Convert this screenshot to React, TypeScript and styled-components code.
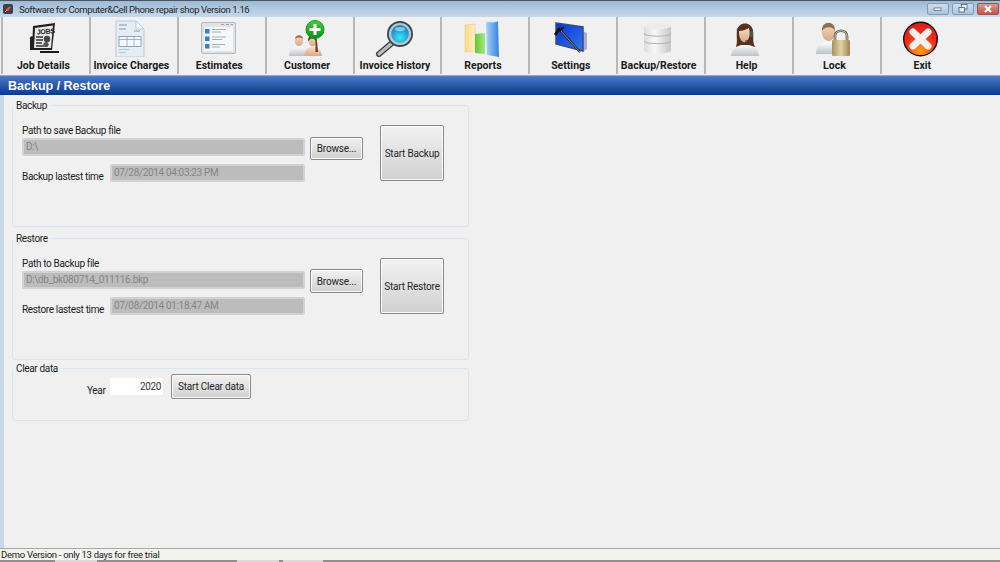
import styled, { createGlobalStyle } from 'styled-components'

const GlobalStyle = createGlobalStyle`
	html,
	body {
		margin: 0;
		padding: 0;
		background: #f0f0f0;
	}

	* {
		box-sizing: border-box;
	}
`

const Window = styled.div`
	display: flex;
	flex-direction: column;
	width: 1000px;
	height: 562px;
	overflow: hidden;
	background: #f0f0f0;
	color: #1c1c1c;
	font-family: Roboto, 'Liberation Sans', Arial, sans-serif;
	font-size: 10px;
	letter-spacing: -0.34px;
`

const TitleBar = styled.div`
	display: flex;
	align-items: center;
	height: 17px;
	padding: 0 1px 0 3px;
	border-top: 1px solid #4d5560;
	background: linear-gradient(#9dbad5, #c6d9ea);
`

const TitleText = styled.span`
	flex: 1;
	margin-left: 6px;
	font-size: 9.5px;
	letter-spacing: -0.39px;
	color: #20252b;
	white-space: nowrap;
`

const WinButtons = styled.div`
	display: flex;
	gap: 3px;
	margin-top: -1px;
`

const WinButton = styled.div<{ $close?: boolean }>`
	display: flex;
	align-items: center;
	justify-content: center;
	width: 22px;
	height: 12px;
	border: 1px solid ${(p) => (p.$close ? '#a05050' : '#7f9ab5')};
	border-radius: 2px;
	background: ${(p) =>
		p.$close
			? 'linear-gradient(#d99a94, #c4544a)'
			: 'linear-gradient(#cfdfee, #a9c3da)'};
`

const Toolbar = styled.div`
	display: flex;
	height: 58px;
	padding-left: 1px;
	background: #f0f0f0;
`

const ToolItem = styled.div`
	display: flex;
	flex-direction: column;
	align-items: center;
	width: 87.9px;
	height: 57px;
	padding: 2px 5px 0 0;
	border-left: 2px solid #b8b8b8;
`

const ToolIcon = styled.svg`
	display: block;
	width: 44px;
	height: 38px;
`

const ToolLabel = styled.span`
	margin-top: 3px;
	font-size: 10.5px;
	line-height: 12px;
	font-weight: 700;
	letter-spacing: 0;
	color: #1a1a1a;
	white-space: nowrap;
`

const HeaderBar = styled.div`
	display: flex;
	align-items: center;
	height: 20px;
	padding-left: 8px;
	border-top: 1px solid #8ca6dc;
	background: linear-gradient(#4c78c4, #0a3a8f);
	color: #ffffff;
	font-family: 'Liberation Sans', Arial, sans-serif;
	font-size: 12.5px;
	font-weight: 700;
	letter-spacing: 0;
`

const Body = styled.div`
	display: flex;
	flex: 1;
	min-height: 0;
`

const SideStrip = styled.div`
	width: 4px;
	background: #c9d7ea;
`

const Main = styled.main`
	display: flex;
	flex-direction: column;
	width: 465px;
	padding: 4px 0 0 8px;
`

const Group = styled.fieldset<{ $height: number; $gap: number }>`
	min-width: 0;
	height: ${(p) => p.$height}px;
	margin: 0 0 ${(p) => p.$gap}px;
	padding: 0;
	border: 1px solid #dce5ee;
	border-radius: 3px;
`

const Legend = styled.legend`
	position: relative;
	top: 1px;
	margin-left: 0;
	padding: 0 4px 0 3px;
	font-size: 10px;
	line-height: 12px;
`

const GroupRow = styled.div`
	display: flex;
	align-items: flex-start;
	padding: 14px 0 0 9px;
`

const Fields = styled.div`
	display: grid;
	grid-template-columns: 283px 53px;
	column-gap: 5px;
	width: 341px;
`

const PathLabel = styled.div`
	grid-column: 1 / 3;
	height: 11px;
	line-height: 11px;
`

const PathCell = styled.div`
	display: flex;
	align-items: flex-start;
	height: 24px;
	padding-top: 2px;
`

const BrowseCell = styled(PathCell)`
	align-items: center;
	padding-top: 0;
`

const TimeRow = styled.div`
	grid-column: 1;
	display: flex;
	align-items: center;
	justify-content: space-between;
	margin-top: 4px;
`

const TimeLabel = styled.span`
	padding-top: 6px;
	white-space: nowrap;
`

const Field = styled.div<{ $width: number }>`
	width: ${(p) => p.$width}px;
	height: 18px;
	padding-left: 2px;
	border: 2px solid #d2d2d2;
	border-radius: 2px;
	background: #bcbcbc;
	color: #868686;
	line-height: 14px;
	white-space: nowrap;
`

const Button = styled.button<{ $width: number; $height: number }>`
	width: ${(p) => p.$width}px;
	height: ${(p) => p.$height}px;
	padding: 0;
	border: 1px solid #8a8a8a;
	border-radius: 2px;
	background: linear-gradient(#f2f2f2, #d0d0d0);
	box-shadow: inset 0 0 0 1px #fafafa;
	color: #262626;
	font-family: inherit;
	font-size: 10px;
	letter-spacing: -0.2px;
	white-space: nowrap;
`

const BigButton = styled(Button)`
	margin-left: 17px;
`

const ClearRow = styled.div`
	display: flex;
	align-items: center;
	padding: 0 0 0 74px;
`

const YearLabel = styled.span`
	width: 23px;
	padding-top: 7px;
`

const YearInput = styled.div`
	width: 53px;
	height: 17px;
	margin-right: 8px;
	padding-right: 2px;
	background: #ffffff;
	color: #333333;
	line-height: 17px;
	text-align: right;
`

const StatusBar = styled.footer`
	height: 12px;
	padding-left: 1px;
	border-top: 1px solid #a8a8a8;
	background: #f4f2ef;
	line-height: 12px;
	font-size: 9.5px;
	letter-spacing: -0.3px;
	color: #1a1a1a;
`

const BottomStrip = styled.div`
	display: flex;
	height: 2px;
	background: #8f8f8f;
`

const StripCell = styled.div<{ $width: number; $light?: boolean }>`
	width: ${(p) => p.$width}px;
	background: ${(p) => (p.$light ? '#d9d9d9' : 'transparent')};
`

const Grads = () => (
	<svg width='0' height='0' style={{ position: 'absolute' }}>
		<defs>
			<linearGradient id='skin' x1='0' y1='0' x2='0' y2='1'>
				<stop offset='0' stopColor='#f6dcc4' />
				<stop offset='1' stopColor='#d9a884' />
			</linearGradient>
			<linearGradient id='shirt' x1='0' y1='0' x2='0' y2='1'>
				<stop offset='0' stopColor='#ffffff' />
				<stop offset='1' stopColor='#bcc3c7' />
			</linearGradient>
			<linearGradient id='green' x1='0' y1='0' x2='0' y2='1'>
				<stop offset='0' stopColor='#3bd43b' />
				<stop offset='1' stopColor='#0a8f1a' />
			</linearGradient>
			<radialGradient id='lens' cx='0.5' cy='0.65' r='0.6'>
				<stop offset='0' stopColor='#3fe0f5' />
				<stop offset='1' stopColor='#0a6fc0' />
			</radialGradient>
			<linearGradient id='barY' x1='0' y1='0' x2='1' y2='0'>
				<stop offset='0' stopColor='#fbd986' />
				<stop offset='1' stopColor='#fff0c2' />
			</linearGradient>
			<linearGradient id='barG' x1='0' y1='0' x2='1' y2='0'>
				<stop offset='0' stopColor='#62c83a' />
				<stop offset='1' stopColor='#a5e878' />
			</linearGradient>
			<linearGradient id='barB' x1='0' y1='0' x2='1' y2='0'>
				<stop offset='0' stopColor='#a9d3fa' />
				<stop offset='1' stopColor='#2f84e0' />
			</linearGradient>
			<linearGradient id='screen' x1='0' y1='0' x2='1' y2='1'>
				<stop offset='0' stopColor='#0a2fd0' />
				<stop offset='1' stopColor='#2c7cf0' />
			</linearGradient>
			<linearGradient id='disk' x1='0' y1='0' x2='1' y2='0'>
				<stop offset='0' stopColor='#dcdcdc' />
				<stop offset='0.4' stopColor='#f8f8f8' />
				<stop offset='1' stopColor='#c6c6c6' />
			</linearGradient>
			<linearGradient id='brass' x1='0' y1='0' x2='1' y2='0'>
				<stop offset='0' stopColor='#a8935f' />
				<stop offset='0.5' stopColor='#e2d3a4' />
				<stop offset='1' stopColor='#9c8550' />
			</linearGradient>
			<radialGradient id='exit' cx='0.5' cy='0.85' r='0.85'>
				<stop offset='0' stopColor='#ffa01a' />
				<stop offset='0.55' stopColor='#f0301a' />
				<stop offset='1' stopColor='#d81c1c' />
			</radialGradient>
		</defs>
	</svg>
)

const JobIcon = () => (
	<ToolIcon viewBox='0 0 44 38'>
		<path d='M12 7 L34 4 L31 31 L11 31 Z' fill='#1f1f1f' />
		<path d='M14 9 L32 6.5 L30 29 L13 29 Z' fill='#e8e8e8' />
		<text x='16' y='15.5' fontSize='7' fontWeight='700' fontFamily='Liberation Sans' fill='#1a1a1a' transform='rotate(-4 16 15)'>JOBS</text>
		<path d='M15 18 H22 M15 21 H22 M15 24 H21 M15 27 H23' stroke='#333' strokeWidth='1.3' />
		<circle cx='26' cy='20' r='3.2' fill='#444' />
		<circle cx='25' cy='25.5' r='2.6' fill='#555' />
		<path d='M9 21 H13 V31 H9 Z' fill='#222' />
		<circle cx='11' cy='19.5' r='2.2' fill='#222' />
		<path d='M19 32 H38 V34 H19 Z' fill='#1a1a1a' />
	</ToolIcon>
)

const InvoiceIcon = () => (
	<ToolIcon viewBox='0 0 44 38'>
		<path d='M7 2 H27 L35 10 V38 H7 Z' fill='#e4ecf4' stroke='#bcc9d6' />
		<path d='M27 2 V10 H35 Z' fill='#f8fbfe' stroke='#bcc9d6' />
		<path d='M10 6 H18 M10 10 H17 M25 12 H31' stroke='#8b98a6' strokeWidth='1' />
		<path d='M10 17.5 H32 V27.5 H10 Z' fill='#f4f7fb' stroke='#8fa5bd' />
		<path d='M10 20.5 H32 M18 17.5 V27.5 M25 17.5 V27.5' stroke='#8fa5bd' strokeWidth='0.8' />
		<path d='M10 30.5 H20 M10 33.5 H17' stroke='#b5c7da' strokeWidth='1' />
	</ToolIcon>
)

const EstimatesIcon = () => (
	<ToolIcon viewBox='0 0 44 38'>
		<rect x='4.5' y='3.5' width='34' height='31' rx='1.5' fill='#dfe3e8' stroke='#b5bac0' />
		<rect x='7' y='8' width='29' height='24' fill='#f6f7f9' />
		<path d='M24 5.5 H27 M29 5.5 H32 M33.5 5.5 H36' stroke='#9aa3ad' strokeWidth='1.2' />
		<rect x='8' y='10' width='4.5' height='4.5' fill='#2f7fd8' />
		<rect x='8' y='17.5' width='4.5' height='4.5' fill='#2f7fd8' />
		<rect x='8' y='25' width='4.5' height='4.5' fill='#2f7fd8' />
		<path d='M15 10.5 H29 M15 13 H24 M15 18 H29 M15 20.5 H25 M15 25.5 H28 M15 28 H23' stroke='#a5adb5' strokeWidth='1' />
	</ToolIcon>
)

const CustomerIcon = () => (
	<ToolIcon viewBox='0 0 44 38'>
		<path d='M4 37 C4 30 8 28 12 27 L17 27 C20 28 22 30 22 37 Z' fill='url(#shirt)' />
		<ellipse cx='14' cy='21.5' rx='4.2' ry='5.6' fill='url(#skin)' />
		<path d='M10 20 C10 15 18 15 18 20 C16 18 12 18 10 20 Z' fill='#8b7150' />
		<path d='M19 37 C20 31 22 29 25 28 L30 28 C34 29 36 31 37 37 Z' fill='url(#skin)' />
		<ellipse cx='27.5' cy='22' rx='4' ry='5.4' fill='url(#skin)' />
		<path d='M23 22 C23 14 32 14 32 22 L33 33 L30.5 33 L30.5 22 C29 19 26 19 24.5 21 Z' fill='#6a3a1c' />
		<circle cx='30' cy='10.5' r='9' fill='url(#green)' stroke='#0d9a20' />
		<path d='M30 5 V16 M24.5 10.5 H35.5' stroke='#ffffff' strokeWidth='3' />
	</ToolIcon>
)

const HistoryIcon = () => (
	<ToolIcon viewBox='0 0 44 38'>
		<path d='M19 24 L6 35' stroke='#3a3f44' strokeWidth='6' strokeLinecap='round' />
		<path d='M19 24 L6 35' stroke='#b6bcc2' strokeWidth='3.4' strokeLinecap='round' />
		<circle cx='27' cy='15' r='12' fill='url(#lens)' stroke='#3f464d' strokeWidth='2' />
		<circle cx='27' cy='15' r='10' fill='none' stroke='#bfc6cc' strokeWidth='2.2' />
		<ellipse cx='27' cy='10' rx='5' ry='2' fill='#ffffff' fillOpacity='0.45' />
	</ToolIcon>
)

const ReportsIcon = () => (
	<ToolIcon viewBox='0 0 44 38'>
		<path d='M4 6 L14 5 V32 L4 33 Z' fill='url(#barY)' stroke='#e2c27a' strokeWidth='0.5' />
		<path d='M14 15 L24 14 V35 L14 34 Z' fill='url(#barG)' />
		<path d='M25 3 L37 2 L38 38 L26 36 Z' fill='url(#barB)' />
		<path d='M25 3 L30 1.5 L38 2 L33 3.5 Z' fill='#d6ecff' />
	</ToolIcon>
)

const SettingsIcon = () => (
	<ToolIcon viewBox='0 0 44 38'>
		<path d='M34 12 L38 14 V30 L33 33 Z' fill='#a9afc8' />
		<path d='M7 4 L34 8 V32 L7 25 Z' fill='url(#screen)' stroke='#3b4a86' strokeWidth='1.5' />
		<path d='M11 11 L31 33' stroke='#1a1a1a' strokeWidth='2' />
		<path d='M11 11 L31 33' stroke='#c8b89a' strokeWidth='0.8' />
		<path d='M5 15 L9 9 L16 8 L13 11 L10 13 L7 17 Z' fill='#141414' />
	</ToolIcon>
)

const BackupIcon = () => (
	<ToolIcon viewBox='0 0 44 38'>
		<path d='M7 7 V31 C7 36 34 36 34 31 V7 Z' fill='url(#disk)' />
		<ellipse cx='20.5' cy='7' rx='13.5' ry='3.2' fill='#ececec' />
		<path d='M7 14.5 C7 18 34 18 34 14.5 M7 22 C7 25.5 34 25.5 34 22' fill='none' stroke='#b0b0b0' />
	</ToolIcon>
)

const HelpIcon = () => (
	<ToolIcon viewBox='0 0 44 38'>
		<path d='M6 37 C7 28 13 27 16 25 L24 25 C28 27 33 28 34 37 Z' fill='url(#shirt)' />
		<path d='M11 28 C13 21 11 17 12 12 C13 2 27 2 28 12 C29 18 27 22 30 28 L24 26 L16 26 Z' fill='#5a2f1c' />
		<path d='M14 12 C17 12 21 11 24 9 C25 13 25 17 23 21 C21 24 18 24 16 21 C14 18 14 15 14 12 Z' fill='url(#skin)' />
		<path d='M12 12 C12 5 27 4 27 12' fill='none' stroke='#444' strokeWidth='0.8' />
		<rect x='25' y='12' width='3' height='6' rx='1.2' fill='#555' />
		<path d='M26 18 C25 21 23 22 20 22' fill='none' stroke='#333' strokeWidth='0.9' />
	</ToolIcon>
)

const LockIcon = () => (
	<ToolIcon viewBox='0 0 44 38'>
		<path d='M4 35 C4 26 8 24 13 23 L21 23 C25 24 27 27 27 35 Z' fill='url(#shirt)' />
		<ellipse cx='16.5' cy='13' rx='6.8' ry='9' fill='url(#skin)' />
		<path d='M10 12 C9 1 24 1 23 12 C21 7 13 7 10 12 Z' fill='#8b7150' />
		<path d='M23 22 V17 C23 10 35 10 35 17 V22' fill='none' stroke='#5c5c4e' strokeWidth='2.6' />
		<path d='M23 22 V17 C23 10 35 10 35 17 V22' fill='none' stroke='#c4c4b4' strokeWidth='1' />
		<rect x='20' y='21' width='18' height='16' rx='1' fill='url(#brass)' />
	</ToolIcon>
)

const ExitIcon = () => (
	<ToolIcon viewBox='0 0 44 38'>
		<circle cx='20.5' cy='20' r='16.8' fill='url(#exit)' stroke='#1a0c0a' strokeWidth='1.4' />
		<path d='M13 13 L28 27 M28 13 L13 27' stroke='#f4f0ee' strokeWidth='7' strokeLinecap='round' />
	</ToolIcon>
)

const tools = [
	{ label: 'Job Details', Icon: JobIcon },
	{ label: 'Invoice Charges', Icon: InvoiceIcon },
	{ label: 'Estimates', Icon: EstimatesIcon },
	{ label: 'Customer', Icon: CustomerIcon },
	{ label: 'Invoice History', Icon: HistoryIcon },
	{ label: 'Reports', Icon: ReportsIcon },
	{ label: 'Settings', Icon: SettingsIcon },
	{ label: 'Backup/Restore', Icon: BackupIcon },
	{ label: 'Help', Icon: HelpIcon },
	{ label: 'Lock', Icon: LockIcon },
	{ label: 'Exit', Icon: ExitIcon }
]

const stripCells = [
	{ width: 55 },
	{ width: 42, light: true },
	{ width: 140 },
	{ width: 42, light: true },
	{ width: 4 },
	{ width: 40, light: true }
]

type SectionProps = {
	title: string
	pathLabel: string
	path: string
	timeLabel: string
	time: string
	action: string
	gap: number
	browseHeight: number
}

function Section({
	title,
	pathLabel,
	path,
	timeLabel,
	time,
	action,
	gap,
	browseHeight
}: SectionProps) {
	return (
		<Group $height={128} $gap={gap}>
			<Legend>{title}</Legend>
			<GroupRow>
				<Fields>
					<PathLabel>{pathLabel}</PathLabel>
					<PathCell>
						<Field $width={283}>{path}</Field>
					</PathCell>
					<BrowseCell>
						<Button $width={53} $height={browseHeight}>
							Browse...
						</Button>
					</BrowseCell>
					<TimeRow>
						<TimeLabel>{timeLabel}</TimeLabel>
						<Field $width={195}>{time}</Field>
					</TimeRow>
				</Fields>
				<BigButton $width={64} $height={56}>
					{action}
				</BigButton>
			</GroupRow>
		</Group>
	)
}

export default function App() {
	return (
		<Window>
			<GlobalStyle />
			<Grads />
			<TitleBar>
				<svg width='10' height='10' viewBox='0 0 10 10'>
					<rect width='10' height='10' rx='2' fill='#3a3f52' />
					<path d='M2 8 L4 4 L8 2 L6.5 6 Z' fill='#e8503c' />
					<path d='M2 8 L3.5 6.5' stroke='#ffffff' />
				</svg>
				<TitleText>Software for Computer&amp;Cell Phone repair shop Version 1.16</TitleText>
				<WinButtons>
					<WinButton>
						<svg width='10' height='6' viewBox='0 0 10 6'>
							<rect x='1' y='2' width='7' height='2.5' fill='#f4f8fc' stroke='#4d5f72' strokeWidth='0.7' />
						</svg>
					</WinButton>
					<WinButton>
						<svg width='10' height='9' viewBox='0 0 10 9'>
							<rect x='3.5' y='0.5' width='5.5' height='4.5' fill='#e8f0f8' stroke='#4d5f72' strokeWidth='0.8' />
							<rect x='1' y='3.5' width='5.5' height='4.5' fill='#e8f0f8' stroke='#4d5f72' strokeWidth='0.8' />
						</svg>
					</WinButton>
					<WinButton $close>
						<svg width='10' height='8' viewBox='0 0 10 8'>
							<path d='M2 1 L8 7 M8 1 L2 7' stroke='#ffffff' strokeWidth='2' />
						</svg>
					</WinButton>
				</WinButtons>
			</TitleBar>
			<Toolbar>
				{tools.map(({ label, Icon }) => (
					<ToolItem key={label}>
						<Icon />
						<ToolLabel>{label}</ToolLabel>
					</ToolItem>
				))}
			</Toolbar>
			<HeaderBar>Backup / Restore</HeaderBar>
			<Body>
				<SideStrip />
				<Main>
					<Section
						title='Backup'
						pathLabel='Path to save Backup file'
						path='D:\'
						timeLabel='Backup lastest time'
						time='07/28/2014 04:03:23 PM'
						action='Start Backup'
						gap={5}
						browseHeight={23}
					/>
					<Section
						title='Restore'
						pathLabel='Path to Backup file'
						path='D:\db_bk080714_011116.bkp'
						timeLabel='Restore lastest time'
						time='07/08/2014 01:18:47 AM'
						action='Start Restore'
						gap={2}
						browseHeight={24}
					/>
					<Group $height={59} $gap={0}>
						<Legend>Clear data</Legend>
						<ClearRow>
							<YearLabel>Year</YearLabel>
							<YearInput>2020</YearInput>
							<Button $width={80} $height={25}>
								Start Clear data
							</Button>
						</ClearRow>
					</Group>
				</Main>
			</Body>
			<StatusBar>Demo Version - only 13 days for free trial</StatusBar>
			<BottomStrip>
				{stripCells.map((cell, i) => (
					<StripCell key={i} $width={cell.width} $light={cell.light} />
				))}
			</BottomStrip>
		</Window>
	)
}
